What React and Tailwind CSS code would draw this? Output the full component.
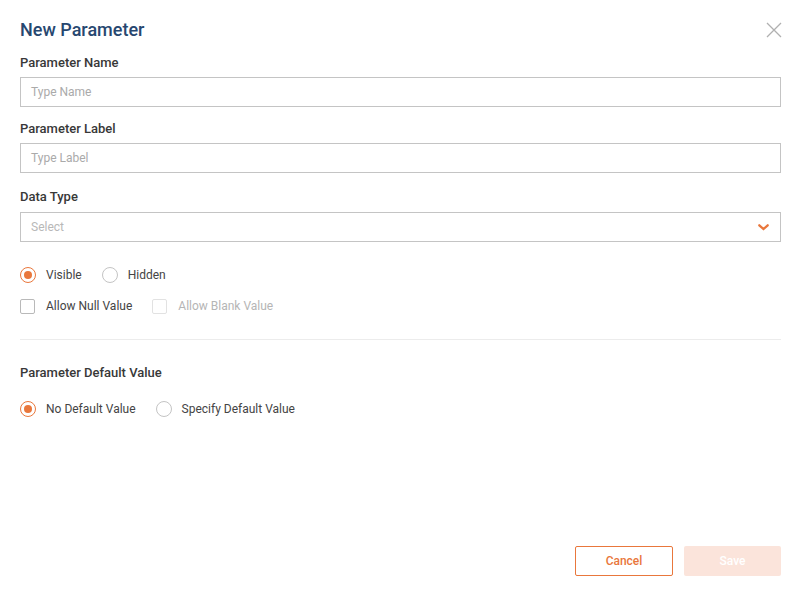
const ORANGE = 'border-[#e9773c]';

function Radio({ checked, label }) {
  return (
    <label className="flex items-center gap-[10px]">
      <span
        className={
          'w-[16px] h-[16px] rounded-full border flex items-center justify-center ' +
          (checked ? 'border-[#e9773c]' : 'border-[#c4c4c4]')
        }
      >
        {checked && <span className="w-[8px] h-[8px] rounded-full bg-[#e9773c]" />}
      </span>
      <span className="text-[12px] leading-[16px] text-[#444]">{label}</span>
    </label>
  );
}

function Checkbox({ label, disabled }) {
  return (
    <label className="flex items-center gap-[11px]">
      <span
        className={
          'w-[15px] h-[15px] rounded-[2px] border ' +
          (disabled ? 'border-[#e2e2e2]' : 'border-[#b9b9b9]')
        }
      />
      <span className={'text-[12px] leading-[16px] ' + (disabled ? 'text-[#b5b5b5]' : 'text-[#444]')}>
        {label}
      </span>
    </label>
  );
}

function Field({ label, placeholder, className }) {
  return (
    <div className={className}>
      <div className="text-[13px] leading-[16px] font-medium text-[#383838]">{label}</div>
      <div className="mt-[6px] h-[30px] border border-[#c4c4c4] flex items-center px-[10px] text-[12px] text-[#aaa]">
        {placeholder}
      </div>
    </div>
  );
}

export default function App() {
  return (
    <div className="w-[801px] h-[591px] bg-white rounded-[3px] flex flex-col px-5 pt-[18px] pb-[15px] font-['Roboto',sans-serif]">
      {/* Header */}
      <div className="flex items-center justify-between">
        <h1 className="text-[18px] leading-[24px] font-medium text-[#274770]">New Parameter</h1>
        <svg width="16" height="16" viewBox="0 0 16 16" className="mr-[-1px]">
          <path d="M1 1L15 15M15 1L1 15" stroke="#b0b0b0" strokeWidth="1.3" fill="none" />
        </svg>
      </div>

      <Field label="Parameter Name" placeholder="Type Name" className="mt-[13px]" />
      <Field label="Parameter Label" placeholder="Type Label" className="mt-[14px]" />

      {/* Data type select */}
      <div className="mt-[16px]">
        <div className="text-[13px] leading-[16px] font-medium text-[#383838]">Data Type</div>
        <div className="mt-[7px] h-[30px] border border-[#c4c4c4] flex items-center justify-between pl-[10px] pr-[11px] text-[12px] text-[#b8b8b8]">
          <span>Select</span>
          <svg width="11" height="7" viewBox="0 0 11 7">
            <path d="M1.3 1.3L5.5 5L9.7 1.3" stroke="#e9773c" strokeWidth="2.3" fill="none" strokeLinecap="round" />
          </svg>
        </div>
      </div>

      <div className="mt-[25px] flex items-center gap-[20px]">
        <Radio checked label="Visible" />
        <Radio label="Hidden" />
      </div>

      <div className="mt-[15px] flex items-center gap-[20px]">
        <Checkbox label="Allow Null Value" />
        <Checkbox label="Allow Blank Value" disabled />
      </div>

      <div className="mt-[25px] h-px bg-[#ececec]" />

      <div className="mt-[25px] text-[13px] leading-[16px] font-medium text-[#383838]">Parameter Default Value</div>

      <div className="mt-[20px] flex items-center gap-[20px]">
        <Radio checked label="No Default Value" />
        <Radio label="Specify Default Value" />
      </div>

      <div className="flex-1" />

      {/* Footer */}
      <div className="flex justify-end gap-[11px]">
        <button className={`w-[98px] h-[30px] border ${ORANGE} rounded-[2px] text-[12px] font-medium text-[#e9773c]`}>
          Cancel
        </button>
        <button className="w-[97px] h-[30px] rounded-[2px] bg-[#fbe4db] text-[12px] font-medium text-white">
          Save
        </button>
      </div>
    </div>
  );
}
